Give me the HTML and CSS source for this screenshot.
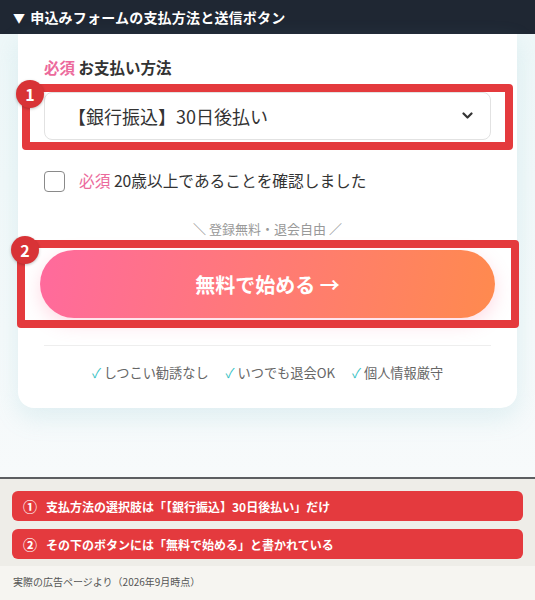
FILE: index.html
```html
<!DOCTYPE html>
<html lang="ja">
<head>
  <meta charset="UTF-8"/>
  <meta name="viewport" content="width=device-width, initial-scale=1.0"/>
  <title>申込みフォームの支払方法と送信ボタン</title>
  <link rel="stylesheet" href="styles.css">
</head>
<body>
  <header class="bar"><span class="tri">▼</span>申込みフォームの支払方法と送信ボタン</header>

  <div class="shot">
    <div class="card">
      <p class="label"><span class="req">必須</span> お支払い方法</p>
      <div class="select">
        <span>【銀行振込】30日後払い</span>
        <svg width="11" height="8" viewBox="0 0 11 8"><polyline points="1.5,1.5 5.5,5.5 9.5,1.5" fill="none" stroke="#333" stroke-width="2.2" stroke-linecap="round" stroke-linejoin="round"/></svg>
      </div>
      <label class="check"><span class="box"></span><span><span class="req">必須</span> 20歳以上であることを確認しました</span></label>
      <p class="note">＼ 登録無料・退会自由 ／</p>
      <button class="cta">無料で始める →</button>
      <hr class="divider"/>
      <ul class="points">
        <li><span class="tick">✓</span> しつこい勧誘なし</li>
        <li><span class="tick">✓</span> いつでも退会OK</li>
        <li><span class="tick">✓</span> 個人情報厳守</li>
      </ul>
    </div>

    <!-- annotation frames laid over the screenshot -->
    <div class="mark mark-1"><span class="num">1</span></div>
    <div class="mark mark-2"><span class="num">2</span></div>
  </div>

  <div class="notes">
    <div class="point"><span class="circ">①</span>支払方法の選択肢は「【銀行振込】30日後払い」だけ</div>
    <div class="point"><span class="circ">②</span>その下のボタンには「無料で始める」と書かれている</div>
  </div>
  <footer class="source">実際の広告ページより（2026年9月時点）</footer>
</body>
</html>
```

FILE: styles.css
```css
* { box-sizing: border-box; margin:0; padding:0; }
body { font-family: "Noto Sans CJK JP", "Noto Sans", sans-serif; background:#f6f5f1; width:535px; height:600px; overflow:hidden; color:#333; }

.bar { height:34px; background:#1f2733; color:#fff; font-size:14px; font-weight:700; line-height:34px; padding-left:13px; letter-spacing:0.2px; }
.bar .tri { font-size:12px; margin-right:5px; }

.shot { position:relative; height:445px; background:linear-gradient(#eef7f8, #f7fafb); border-bottom:2px solid #5c5e61; }
.card { margin:0 18px; background:#fff; border-radius:0 0 16px 16px; padding:23px 26px 26px; box-shadow:0 10px 24px rgba(120,195,205,0.18); }

.label { font-size:15.5px; font-weight:700; line-height:20px; color:#333; }
.req { color:#ec6a9c; }

.select { margin-top:15px; height:48px; border:1px solid #e2e2e2; border-radius:8px; display:flex; align-items:center; justify-content:space-between; padding:0 17px 0 23px; font-size:18px; color:#333; }

.check { margin-top:30px; display:flex; align-items:center; gap:14px; font-size:15.7px; line-height:22px; color:#333; }
.check .box { width:21px; height:21px; border:1.5px solid #8a8a8a; border-radius:4px; background:#fff; flex:none; }

.note { margin-top:29px; text-align:center; font-size:13px; line-height:16px; color:#999; }

.cta { display:block; margin:13px -4px 0; width:calc(100% + 8px); height:68px; border:none; border-radius:34px; background:linear-gradient(100deg, #ff6a9d, #ff8a4e); color:#fff; font-family:inherit; font-size:20px; font-weight:700; box-shadow:0 6px 18px rgba(255,110,150,0.25); }

.divider { margin-top:27px; border:none; border-top:1px solid #eee; }

.points { list-style:none; margin-top:18px; display:flex; justify-content:center; gap:17px; font-size:13.2px; line-height:18px; color:#666; }
.tick { color:#36c2c4; }

.mark { position:absolute; border:8px solid #e43a3d; border-radius:4px; }
.mark-1 { left:22px; top:50px; width:491px; height:66px; }
.mark-2 { left:17px; top:206px; width:502px; height:88px; }
.num { position:absolute; left:-14px; top:-12px; width:28px; height:28px; border-radius:50%; background:#d83336; color:#fff; font-size:16px; font-weight:700; line-height:28px; text-align:center; box-shadow:0 1px 3px rgba(0,0,0,0.25); }

.notes { background:#eeede8; padding:12px 12px 7px; display:flex; flex-direction:column; gap:8px; }
.point { height:30px; background:#e43a3e; border-radius:6px; color:#fff; font-size:12px; font-weight:700; line-height:30px; padding-left:11px; }
.point .circ { font-size:14px; margin-right:9px; }

.source { padding:8px 13px; font-size:10px; line-height:16px; color:#555; }
```
